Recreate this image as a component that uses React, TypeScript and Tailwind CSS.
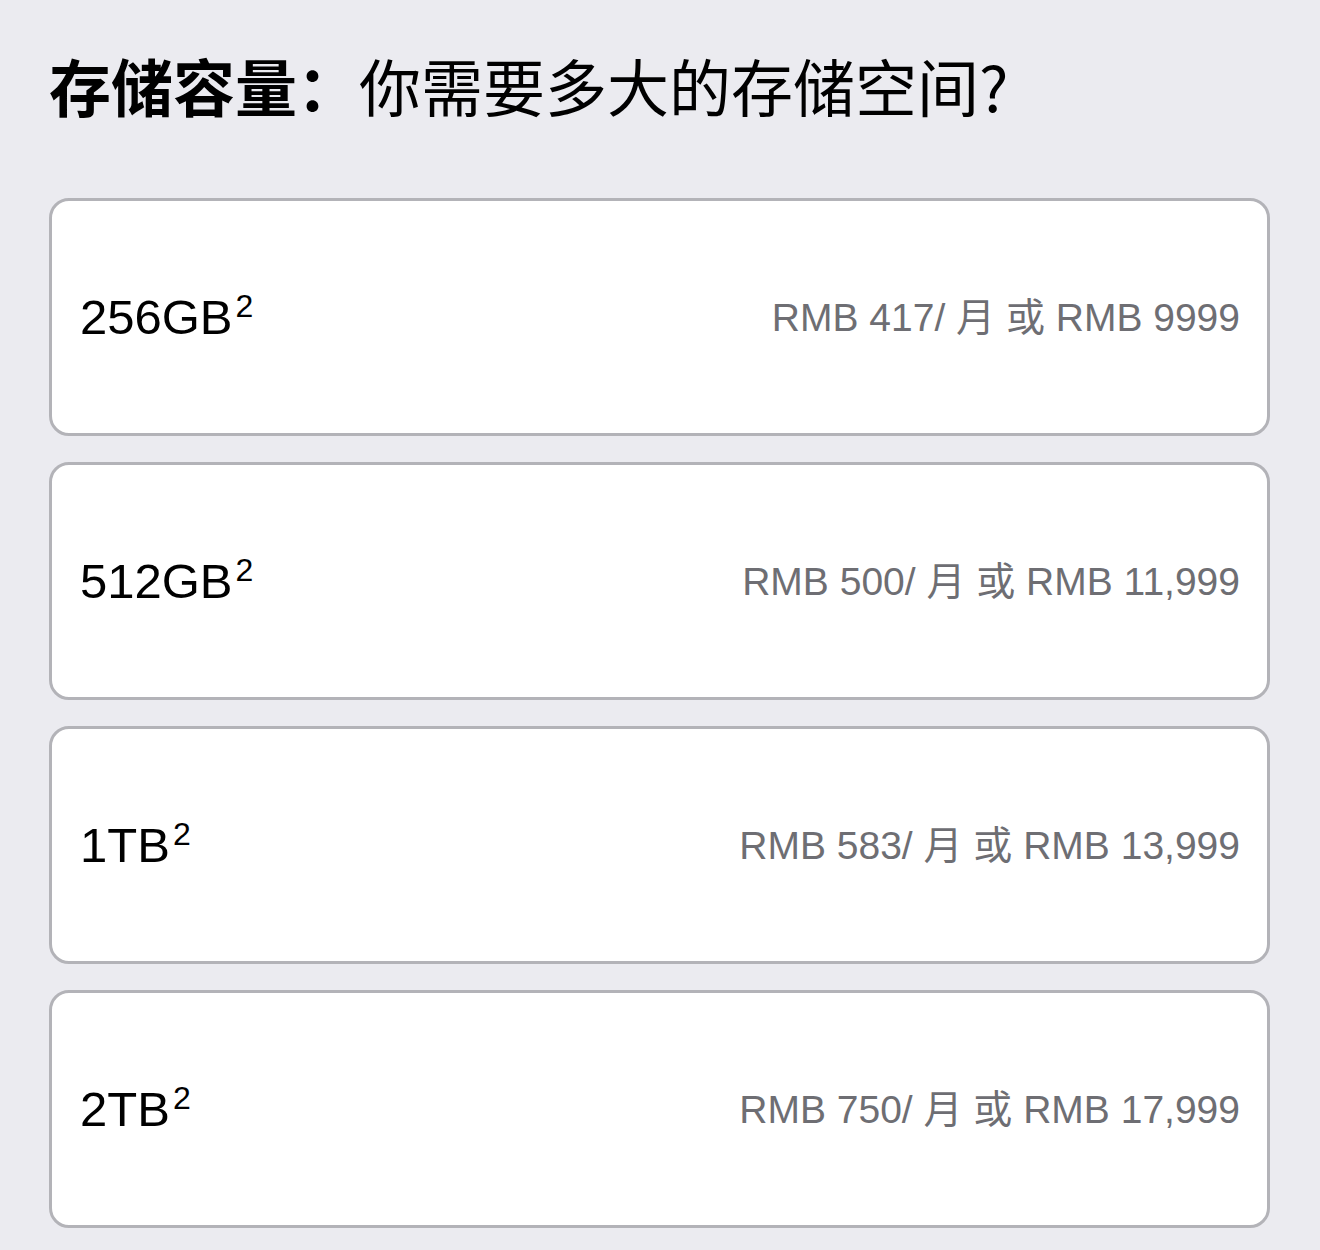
const options = [
  { size: "256GB", monthly: "417", full: "9999" },
  { size: "512GB", monthly: "500", full: "11,999" },
  { size: "1TB", monthly: "583", full: "13,999" },
  { size: "2TB", monthly: "750", full: "17,999" },
];

export default function App() {
  return (
    <div className="min-h-[1250px] w-full bg-[#ebebf0] pt-[48px] pl-[49px] pr-[50px] font-['Liberation_Sans','Noto_Sans_CJK_SC',sans-serif]">
      <h1 className="mb-[76px] text-[62px] leading-[74px] font-normal text-black font-['Noto_Sans_CJK_SC',sans-serif]">
        <span className="font-bold">存储容量：</span>
        你需要多大的存储空间?
      </h1>
      <div className="flex flex-col gap-[26px]">
        {options.map((o) => (
          <div
            key={o.size}
            className="flex h-[238px] items-center justify-between rounded-[20px] border-[3px] border-[#b3b3b8] bg-white pl-[28px] pr-[27px]"
          >
            <div className="text-[49px] leading-none text-black">
              {o.size}
              <span className="relative -top-[17px] ml-[3px] text-[32px] leading-none">2</span>
            </div>
            <div className="text-[39px] leading-none text-[#6e6e73]">
              RMB {o.monthly}/ 月 或 RMB {o.full}
            </div>
          </div>
        ))}
      </div>
    </div>
  );
}
